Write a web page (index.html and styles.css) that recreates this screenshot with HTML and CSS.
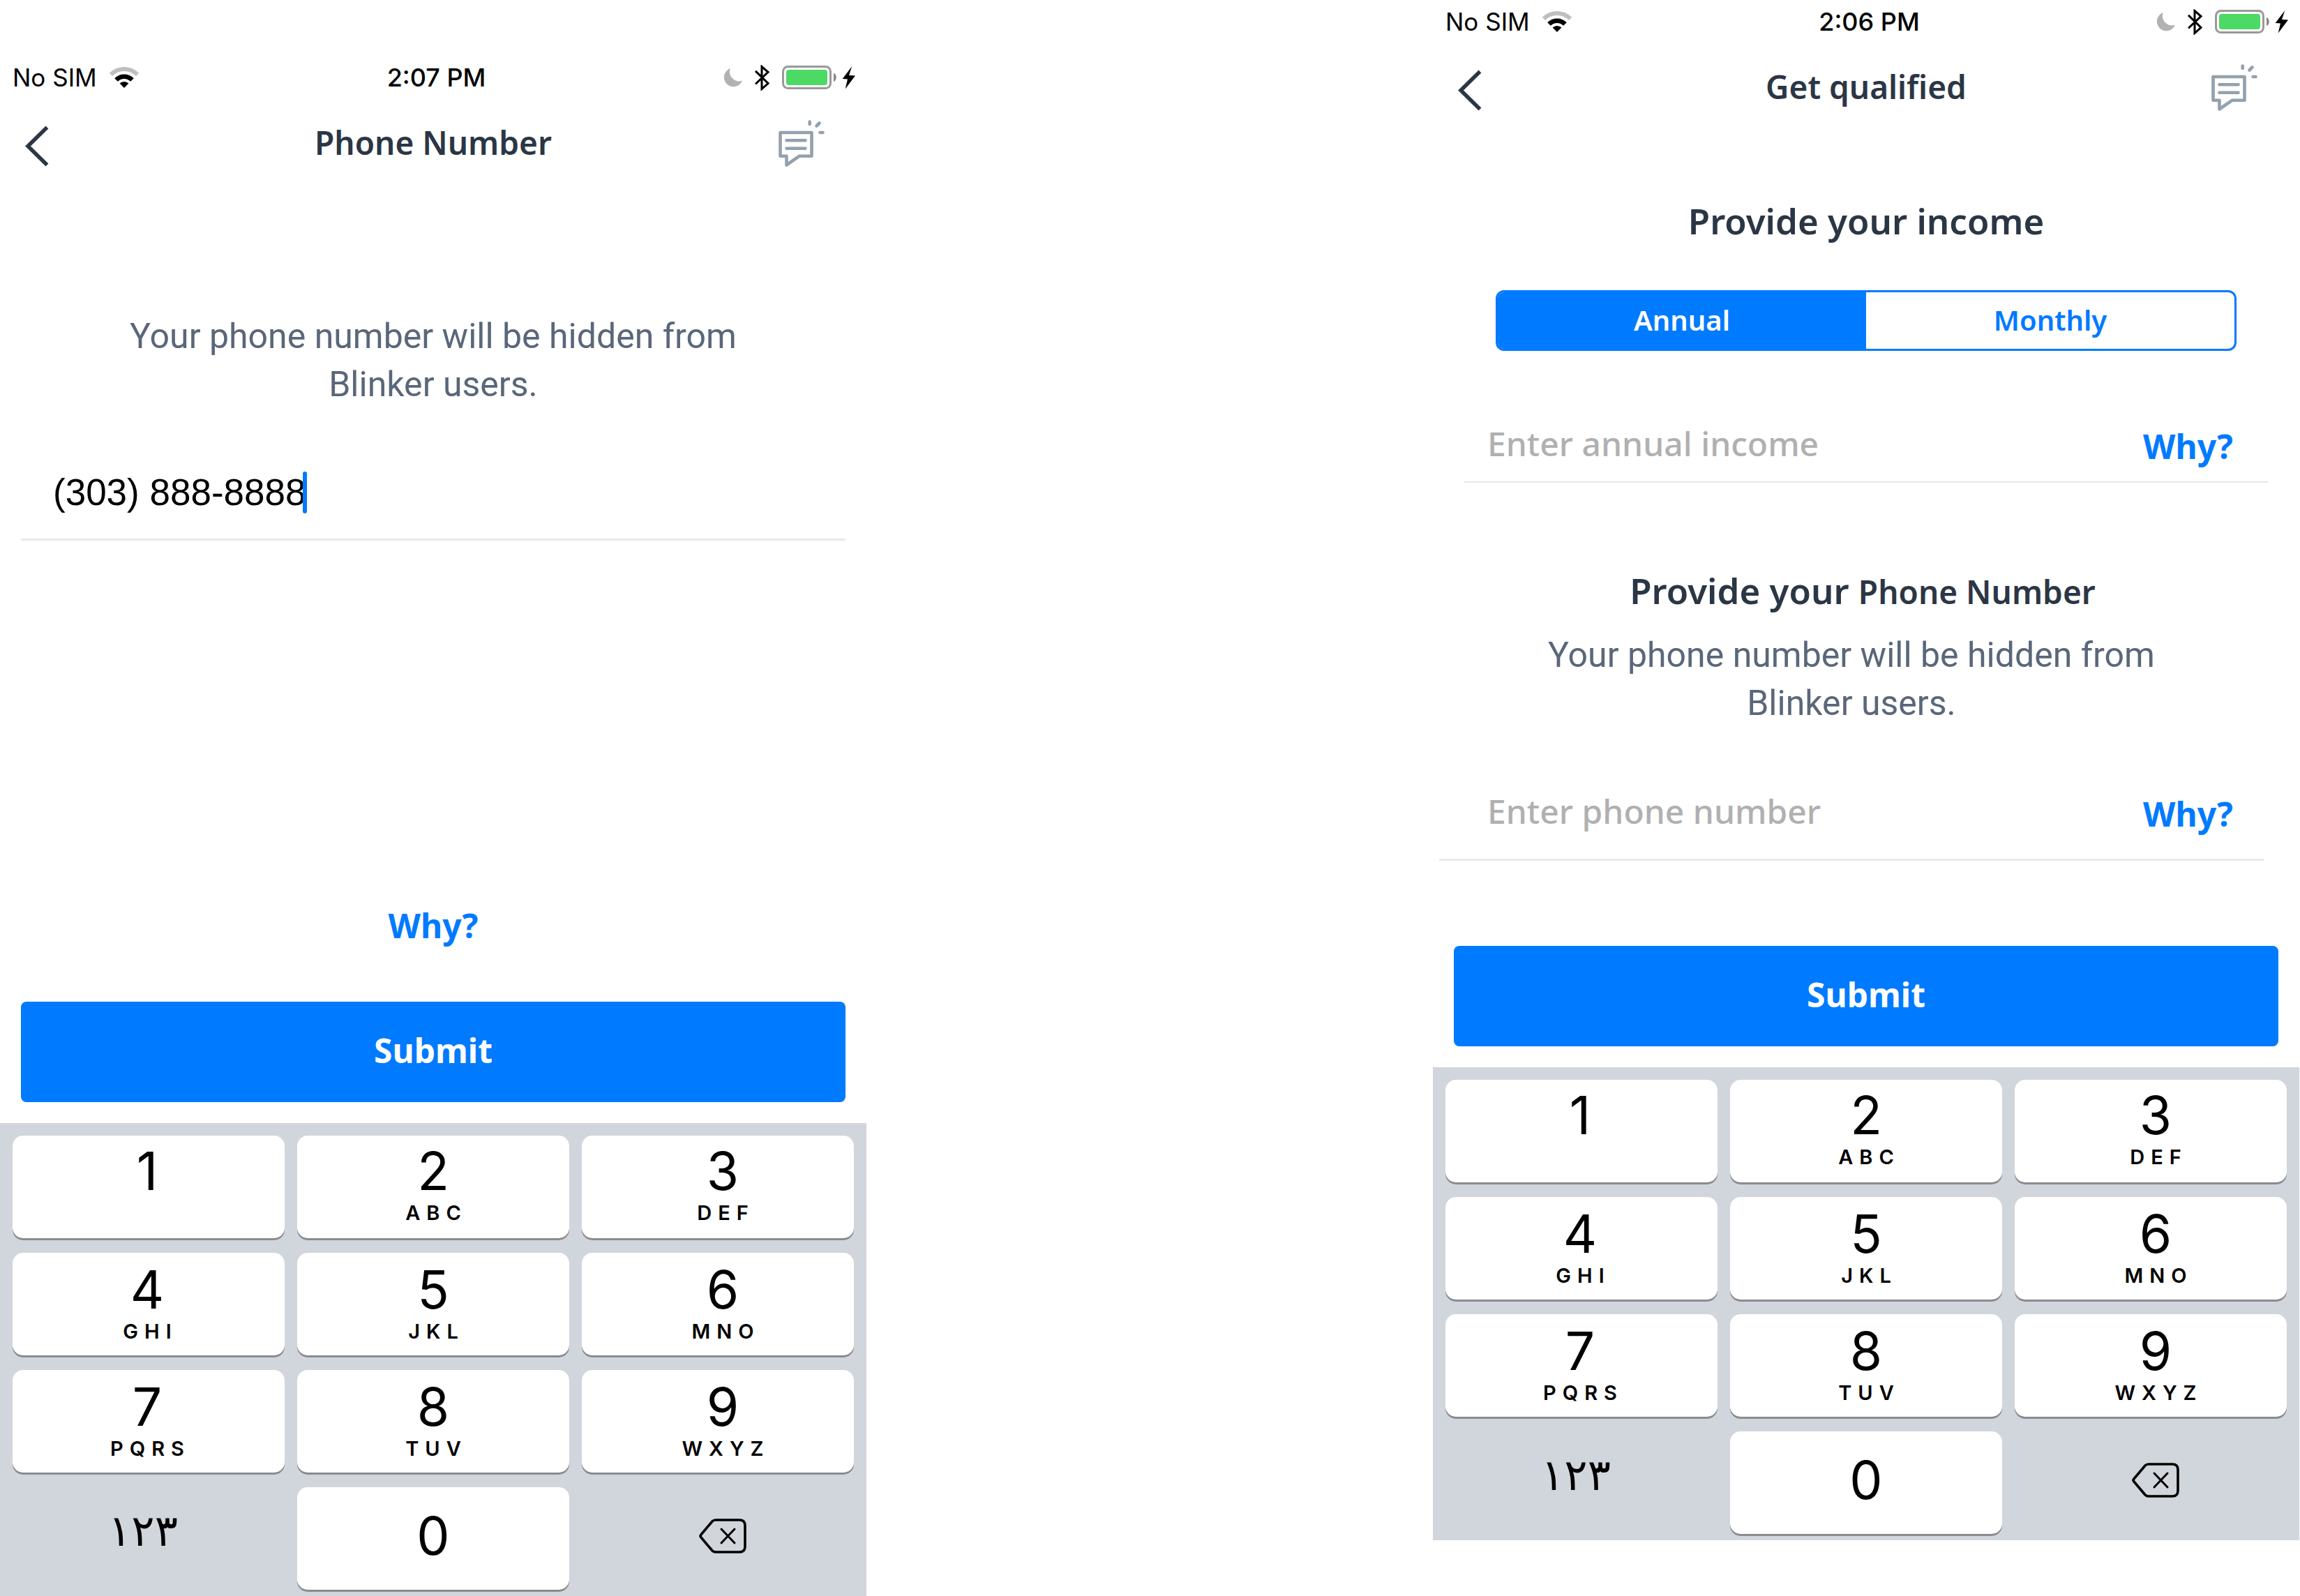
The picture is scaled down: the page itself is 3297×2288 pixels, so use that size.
FILE: index.html
```
<!DOCTYPE html>
<html lang="en">
<head>
<meta charset="utf-8">
<meta name="viewport" content="width=device-width, initial-scale=1">
<title>Phone Number and Get qualified</title>
<link rel="stylesheet" href="styles.css">
</head>
<body>
<svg class="sprite" aria-hidden="true">
  <symbol id="wifi" viewBox="0 0 42 30">
    <path d="M1.9 10.9A27 27 0 0 1 40.1 10.9" fill="none" stroke="#bfbfbf" stroke-width="6"/>
    <path d="M9.5 18.5A16.3 16.3 0 0 1 32.5 18.5" fill="none" stroke="#000" stroke-width="6.5"/>
    <path d="M21 30L14.6 23.6A9 9 0 0 1 27.4 23.6Z"/>
  </symbol>
  <symbol id="moon" viewBox="0 0 27 27">
    <path d="M10 0A13.5 13.5 0 1 0 27 17.5A13.4 13.4 0 0 1 10 0Z" fill="#b2b2b2"/>
  </symbol>
  <symbol id="bluetooth" viewBox="0 0 21 37">
    <path d="M1 8.8L19 26.5L10 34.5V2.5L19 10.3L1 27.5" fill="none" stroke="#000" stroke-width="3"/>
  </symbol>
  <symbol id="battery" viewBox="0 0 106 34">
    <rect x="1.5" y="1.5" width="68" height="31" rx="7" fill="none" stroke="#999" stroke-width="3"/>
    <rect x="6" y="6" width="59" height="22" rx="4" fill="#4cd964"/>
    <path d="M74 11C79 12 79 22 74 23Z" fill="#888"/>
    <path d="M100.3 1L96 14L105 14.5L90.7 33.5L94 19.5L86.7 19Z"/>
  </symbol>
  <symbol id="back" viewBox="0 0 36 80">
    <path d="M31.5 18.5L4 45.5L31.5 72.5" fill="none" stroke="#2b3645" stroke-width="5.5"/>
  </symbol>
  <symbol id="chat" viewBox="0 0 66 80">
    <g fill="none" stroke="#93a1ad" stroke-width="4.6" stroke-linecap="round" stroke-linejoin="round">
      <path d="M2.5 26H47.5V59.7H30L11.5 72.5V59.7H2.5Z"/>
      <path d="M11.5 37.3H38.5M11.5 48.7H38.5M44.7 10.5V14M54.5 16.5L58.5 12.5M59.5 26H63.5"/>
    </g>
  </symbol>
  <symbol id="erase" viewBox="0 0 68 50">
    <path d="M24 2H58Q66 2 66 10V40Q66 48 58 48H24Q21 48 19 46L3 27Q1 25 3 23L19 4Q21 2 24 2Z" fill="none" stroke="#000" stroke-width="3.6"/>
    <path d="M32 15L51 35M51 15L32 35" fill="none" stroke="#000" stroke-width="3" stroke-linecap="round"/>
  </symbol>
</svg>

<div class="board">
  <section class="phone phone-lower">
    <div class="status">
      <div class="carrier"><span>No SIM</span><svg width="42" height="30"><use href="#wifi"/></svg></div>
      <time class="clock">2:07 PM</time>
      <div class="indicators">
        <svg width="27" height="27"><use href="#moon"/></svg>
        <svg width="21" height="37"><use href="#bluetooth"/></svg>
        <svg width="106" height="34"><use href="#battery"/></svg>
      </div>
    </div>
    <header class="nav">
      <button class="icon-button" type="button" aria-label="Back"><svg width="36" height="80"><use href="#back"/></svg></button>
      <h1 class="nav-title">Phone Number</h1>
      <button class="icon-button icon-button-end" type="button" aria-label="Messages"><svg width="66" height="80"><use href="#chat"/></svg></button>
    </header>
    <form class="form">
      <p class="note note-top">Your phone number will be hidden from Blinker users.</p>
      <div class="entry">
        <input class="entry-input" type="tel" aria-label="Phone number" value="(303) 888-8888"><span class="caret"></span>
      </div>
      <a class="why why-center" href="#why">Why?</a>
      <button class="submit" type="submit">Submit</button>
    </form>
    <div class="keypad">
      <button class="key" type="button"><span class="digit">1</span></button>
      <button class="key" type="button"><span class="digit">2</span><span class="letters">ABC</span></button>
      <button class="key" type="button"><span class="digit">3</span><span class="letters">DEF</span></button>
      <button class="key" type="button"><span class="digit">4</span><span class="letters">GHI</span></button>
      <button class="key" type="button"><span class="digit">5</span><span class="letters">JKL</span></button>
      <button class="key" type="button"><span class="digit">6</span><span class="letters">MNO</span></button>
      <button class="key" type="button"><span class="digit">7</span><span class="letters">PQRS</span></button>
      <button class="key" type="button"><span class="digit">8</span><span class="letters">TUV</span></button>
      <button class="key" type="button"><span class="digit">9</span><span class="letters">WXYZ</span></button>
      <button class="key key-plain" type="button"><span class="numerals">١٢٣</span></button>
      <button class="key key-single" type="button"><span class="digit">0</span></button>
      <button class="key key-plain" type="button" aria-label="Delete"><svg width="68" height="50"><use href="#erase"/></svg></button>
    </div>
  </section>

  <section class="phone phone-right">
    <div class="status">
      <div class="carrier"><span>No SIM</span><svg width="42" height="30"><use href="#wifi"/></svg></div>
      <time class="clock">2:06 PM</time>
      <div class="indicators">
        <svg width="27" height="27"><use href="#moon"/></svg>
        <svg width="21" height="37"><use href="#bluetooth"/></svg>
        <svg width="106" height="34"><use href="#battery"/></svg>
      </div>
    </div>
    <header class="nav">
      <button class="icon-button" type="button" aria-label="Back"><svg width="36" height="80"><use href="#back"/></svg></button>
      <h1 class="nav-title">Get qualified</h1>
      <button class="icon-button icon-button-end" type="button" aria-label="Messages"><svg width="66" height="80"><use href="#chat"/></svg></button>
    </header>
    <form class="form">
      <h2 class="heading heading-income">Provide your income</h2>
      <div class="segments">
        <label class="segment"><input class="segment-input" type="radio" name="period" checked><span class="segment-text">Annual</span></label>
        <label class="segment"><input class="segment-input" type="radio" name="period"><span class="segment-text">Monthly</span></label>
      </div>
      <div class="row row-income">
        <input class="row-input" type="text" aria-label="Annual income" placeholder="Enter annual income">
        <a class="why" href="#why-income">Why?</a>
      </div>
      <h2 class="heading heading-phone">Provide your <span class="heading-small">Phone Number</span></h2>
      <p class="note note-phone">Your phone number will be hidden from Blinker users.</p>
      <div class="row row-phone">
        <input class="row-input" type="tel" aria-label="Phone number" placeholder="Enter phone number">
        <a class="why" href="#why-phone">Why?</a>
      </div>
      <button class="submit" type="submit">Submit</button>
    </form>
    <div class="keypad">
      <button class="key" type="button"><span class="digit">1</span></button>
      <button class="key" type="button"><span class="digit">2</span><span class="letters">ABC</span></button>
      <button class="key" type="button"><span class="digit">3</span><span class="letters">DEF</span></button>
      <button class="key" type="button"><span class="digit">4</span><span class="letters">GHI</span></button>
      <button class="key" type="button"><span class="digit">5</span><span class="letters">JKL</span></button>
      <button class="key" type="button"><span class="digit">6</span><span class="letters">MNO</span></button>
      <button class="key" type="button"><span class="digit">7</span><span class="letters">PQRS</span></button>
      <button class="key" type="button"><span class="digit">8</span><span class="letters">TUV</span></button>
      <button class="key" type="button"><span class="digit">9</span><span class="letters">WXYZ</span></button>
      <button class="key key-plain" type="button"><span class="numerals">١٢٣</span></button>
      <button class="key key-single" type="button"><span class="digit">0</span></button>
      <button class="key key-plain" type="button" aria-label="Delete"><svg width="68" height="50"><use href="#erase"/></svg></button>
    </div>
  </section>
</div>
</body>
</html>
```
FILE: styles.css
```
* {
  box-sizing: border-box;
}

:root {
  --blue: #007aff;
  --ink: #2b3645;
  --slate: #5a677a;
  --line: #e8e8ec;
  --system: Inter, "Liberation Sans", sans-serif;
  --title: "Noto Sans", "Open Sans", sans-serif;
}

body {
  margin: 0;
  background: #fff;
  color: #000;
  font-family: var(--system);
}

button,
input {
  margin: 0;
  padding: 0;
  border: 0;
  background: none;
  color: inherit;
  font: inherit;
  outline: none;
}

svg {
  display: block;
  flex: none;
}

h1,
h2,
p {
  margin: 0;
}

.sprite {
  position: absolute;
  width: 0;
  height: 0;
}

/* Two phones side by side, with open space between them */
.board {
  display: grid;
  grid-template-columns: minmax(0, 1242fr) 812fr minmax(0, 1242fr);
  align-items: start;
  padding-right: 1px;
}

.phone-lower {
  margin-top: 80px;
}

.phone-right {
  grid-column: 3;
}

/* Status bar */
.status {
  display: grid;
  grid-template-columns: 1fr auto 1fr;
  align-items: center;
  height: 62px;
  padding: 0 15px 0 18px;
  font-size: 35px;
}

.carrier {
  display: flex;
  align-items: center;
  gap: 18px;
}

.clock {
  padding-left: 6px;
  font-size: 36px;
  font-weight: 500;
}

.indicators {
  display: flex;
  align-items: center;
  justify-content: flex-end;
  gap: 18px;
}

/* Navigation bar */
.nav {
  display: grid;
  grid-template-columns: 1fr auto 1fr;
  align-items: center;
  height: 124px;
  padding: 0 60px 0 36px;
}

.nav-title {
  padding-left: 24px;
  color: var(--ink);
  font: 600 46px/64px var(--title);
}

.icon-button {
  justify-self: start;
}

.icon-button-end {
  justify-self: end;
}

/* Form */
.form {
  display: flex;
  flex-direction: column;
  padding-bottom: 30px;
}

.note {
  padding: 0 150px;
  color: var(--slate);
  font: 400 50px/69px Roboto, sans-serif;
  text-align: center;
}

.note-top {
  margin-top: 182px;
}

.note-phone {
  margin: 24px 42px 0 0;
}

.entry {
  display: flex;
  align-items: center;
  height: 135px;
  margin: 54px 30px 0;
  padding-left: 46px;
  border-bottom: 3px solid var(--line);
}

.entry-input {
  field-sizing: content;
  height: 60px;
  font: 400 53px/60px "Liberation Sans", Arial, sans-serif;
}

.caret {
  width: 6px;
  height: 60px;
  margin-left: -4px;
  border-radius: 3px;
  background: var(--blue);
}

.why {
  color: var(--blue);
  font: 700 48px/64px var(--title);
  text-decoration: none;
}

.why-center {
  align-self: center;
  margin-top: 520px;
  margin-bottom: 77px;
}

.submit {
  height: 144px;
  margin: 0 30px;
  padding-bottom: 4px;
  border-radius: 8px;
  background: var(--blue);
  color: #fff;
  font: 700 48px/64px var(--title);
}

.heading {
  color: var(--ink);
  font: 600 51px/70px var(--title);
  text-align: center;
}

.heading-income {
  margin-top: 95px;
}

.heading-phone {
  margin-top: 119px;
  padding-right: 10px;
}

.heading-small {
  font-size: 46px;
  line-height: 1;
}

.segments {
  display: grid;
  grid-template-columns: 1fr 1fr;
  height: 87px;
  margin: 65px 90px 0;
  overflow: hidden;
  border: 3px solid var(--blue);
  border-radius: 12px;
}

.segment {
  display: flex;
  position: relative;
}

.segment-input {
  position: absolute;
  opacity: 0;
}

.segment-text {
  flex: 1;
  color: var(--blue);
  font: 600 40px/80px var(--title);
  text-align: center;
}

.segment-input:checked + .segment-text {
  background: var(--blue);
  color: #fff;
}

.row {
  display: flex;
  align-items: center;
  justify-content: space-between;
}

.row-input {
  flex: 1;
  min-width: 0;
  height: 70px;
  font: 500 48px/70px var(--title);
}

.row-input::placeholder {
  color: #b0b0b0;
  opacity: 1;
}

.row .why {
  padding-top: 8px;
}

.row-income {
  height: 110px;
  margin: 79px 45px 0;
  padding: 0 50px 0 33px;
  border-bottom: 2px solid var(--line);
}

.row-phone {
  height: 140px;
  margin: 51px 51px 122px 9px;
  padding: 0 44px 0 69px;
  border-bottom: 3px solid var(--line);
}

/* Number pad */
.keypad {
  display: grid;
  grid-template-columns: repeat(3, 1fr);
  gap: 21px 18px;
  padding: 18px 18px 9px;
  background: #d1d5dc;
}

.key {
  display: flex;
  flex-direction: column;
  align-items: center;
  height: 147px;
  padding-top: 14px;
  border-radius: 15px;
  background: #fff;
  box-shadow: 0 3px 0 #8a8b8f;
}

.key:nth-child(-n+3) {
  padding-top: 12px;
}

.key:nth-child(3n+1) {
  padding-right: 4px;
}

.key:nth-child(3n) {
  padding-left: 14px;
}

.digit {
  font-size: 75px;
  line-height: 78px;
}

.letters {
  padding-left: 9px;
  font-size: 29px;
  font-weight: 600;
  line-height: 42px;
  letter-spacing: 9px;
}

.key-single,
.key-plain {
  justify-content: center;
  padding-top: 0;
  padding-bottom: 8px;
}

.key-plain {
  background: none;
  box-shadow: none;
}

.numerals {
  padding-right: 12px;
  padding-bottom: 14px;
  font: 400 62px/64px "DejaVu Sans", sans-serif;
}
```
